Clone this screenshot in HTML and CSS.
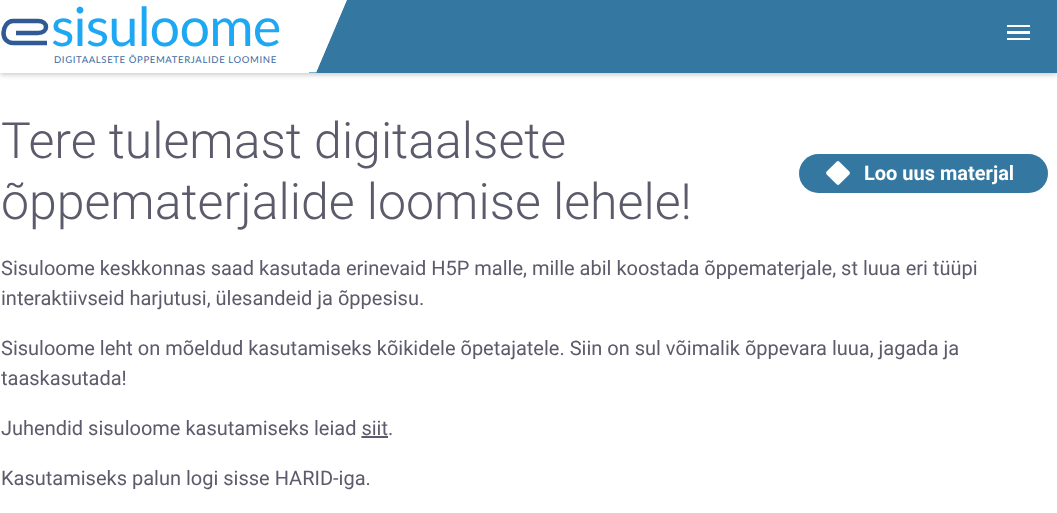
FILE: index.html
```html
<!DOCTYPE html>
<html lang="et">
<head>
    <meta charset="UTF-8">
    <title>Sisuloome</title>
    <link rel="stylesheet" href="styles.css">
</head>
<body>
<header class="topbar">
    <a class="logo" href="#">
        <svg class="logo-mark" width="50" height="30" viewBox="0 0 50 30">
            <path d="M47 26H13C7 26 3.500 21.500 3.500 16S7 4 13 4H38C43 4 46 6.500 46 10S43 16 38 16H16" fill="none" stroke="#2f5a94" stroke-width="4.500"/>
        </svg>
        <div class="logo-text">
            <div class="logo-name">sisuloome</div>
            <div class="logo-sub">DIGITAALSETE ÕPPEMATERJALIDE LOOMINE</div>
        </div>
    </a>
    <button class="menu-btn" aria-label="Menu">
        <span></span><span></span><span></span>
    </button>
</header>
<main class="content">
    <div class="title-row">
        <h1>Tere tulemast digitaalsete õppematerjalide loomise lehele!</h1>
        <a class="create-btn" href="#"><span class="diamond"></span>Loo uus materjal</a>
    </div>
    <p>Sisuloome keskkonnas saad kasutada erinevaid H5P malle, mille abil koostada õppematerjale, st luua eri tüüpi interaktiivseid harjutusi, ülesandeid ja õppesisu.</p>
    <p>Sisuloome leht on mõeldud kasutamiseks kõikidele õpetajatele. Siin on sul võimalik õppevara luua, jagada ja taaskasutada!</p>
    <p>Juhendid sisuloome kasutamiseks leiad <a href="#">siit</a>.</p>
    <p>Kasutamiseks palun logi sisse HARID-iga.</p>
</main>
</body>
</html>
```

FILE: styles.css
```css
html, body {
    margin: 0;
    padding: 0;
    background-color: #fff;
    font-family: Roboto, sans-serif;
    color: #5b5b6b;
    text-rendering: geometricPrecision;
}

.topbar {
    height: 73px;
    display: flex;
    justify-content: space-between;
    align-items: center;
    background:
        linear-gradient(#7fb2cf, #7fb2cf) 309px 100% / 7px 1px no-repeat,
        linear-gradient(113deg, #fff 319px, #3478a1 319.800px);
    box-shadow: 0 2px 5px rgba(0, 0, 0, 0.2);
}

.logo {
    display: flex;
    align-items: flex-start;
    text-decoration: none;
    height: 73px;
}

.logo-mark {
    margin-top: 17px;
    flex-shrink: 0;
}

.logo-text {
    margin-left: 4px;
}

.logo-name {
    font-family: Lato, sans-serif;
    font-weight: 400;
    font-size: 54px;
    line-height: 52px;
    letter-spacing: -0.800px;
    color: #1ea7f2;
    margin-left: -3px;
}

.logo-sub {
    font-family: Lato, sans-serif;
    font-size: 9.500px;
    line-height: 10px;
    letter-spacing: 0.650px;
    color: #3d6aa3;
    margin-top: 4px;
}

.menu-btn {
    display: flex;
    flex-direction: column;
    gap: 4px;
    margin-right: 27px;
    margin-bottom: 8px;
    padding: 0;
    border: 0;
    background: none;
}

.menu-btn span {
    width: 23px;
    height: 2.500px;
    background-color: #fff;
}

.content {
    padding: 39px 9px 0 1px;
    will-change: transform;
}

.title-row {
    display: flex;
    justify-content: space-between;
    align-items: center;
    margin-bottom: 19px;
}

h1 {
    margin: 0;
    width: 720px;
    font-weight: 300;
    font-size: 50px;
    line-height: 61px;
}

.create-btn {
    display: flex;
    align-items: center;
    gap: 17px;
    width: 249px;
    height: 39px;
    box-sizing: border-box;
    padding-left: 30px;
    border-radius: 20px;
    background-color: #3478a1;
    color: #fff;
    font-weight: 700;
    font-size: 20px;
    text-decoration: none;
}

.diamond {
    width: 18px;
    height: 18px;
    background-color: #fff;
    border-radius: 2px;
    transform: rotate(45deg);
}

p {
    margin: 0 0 20px;
    font-size: 20px;
    line-height: 30px;
}

p a {
    color: inherit;
}
```
